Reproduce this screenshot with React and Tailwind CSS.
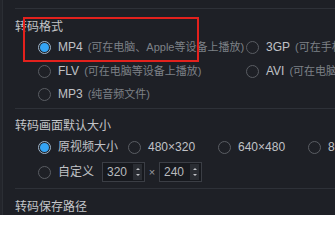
import React from "react";

const font = { fontFamily: '"Liberation Sans", "Noto Sans CJK SC", sans-serif' };

function Radio({ checked }) {
  if (checked) {
    return (
      <span className="w-[13px] h-[13px] shrink-0 rounded-full border border-[#9fb6cc] bg-[#1e2026] flex items-center justify-center">
        <span className="w-[9px] h-[9px] rounded-full bg-[#35a4f4]" />
      </span>
    );
  }
  return <span className="w-[13px] h-[13px] shrink-0 rounded-full border border-[#5a5d63]" />;
}

function Option({ checked, label, hint, className = "" }) {
  return (
    <div className={"flex items-center whitespace-nowrap " + className}>
      <Radio checked={checked} />
      <span className="ml-[7px] text-[12px] text-[#c0c2c6]">{label}</span>
      {hint && <span className="ml-[5px] text-[11px] text-[#7d8087]">{hint}</span>}
    </div>
  );
}

function Spin({ value }) {
  return (
    <div className="w-[43px] h-[20px] flex items-center border border-[#3b3e45] bg-[#17191e]">
      <span className="flex-1 pl-[4px] text-[12px] text-[#b9bbbf]">{value}</span>
      <div className="w-[9px] h-[16px] mr-[2px] flex flex-col items-center justify-center gap-[4px] bg-[#2a2d33]">
        <span className="w-0 h-0 border-l-[2px] border-r-[2px] border-b-[2px] border-l-transparent border-r-transparent border-b-[#c0c2c6]" />
        <span className="w-0 h-0 border-l-[2px] border-r-[2px] border-t-[2px] border-l-transparent border-r-transparent border-t-[#c0c2c6]" />
      </div>
    </div>
  );
}

function Heading({ children, className = "" }) {
  return (
    <div className={"h-[14px] flex items-center text-[12px] text-[#c3c5c9] " + className}>{children}</div>
  );
}

export default function App() {
  return (
    <div className="w-[335px] h-[215px] overflow-hidden bg-[#1e2026] flex" style={font}>
      <div className="w-[3px] shrink-0 bg-[#23252b] border-r border-[#2b2e34]" />
      <div className="flex-1 pl-[12px] pt-[8px]">
        <div className="relative border-t border-[#2e3138]">
          <div className="absolute left-[8px] top-[8px] w-[176px] h-[45px] border-2 border-[#e3211d] pointer-events-none" />
          <Heading className="mt-[11px]">转码格式</Heading>
          <div className="pl-[23px]">
            <div className="h-[20px] mt-[3px] flex items-center">
              <Option checked label="MP4" hint="(可在电脑、Apple等设备上播放)" className="w-[208px]" />
              <Option label="3GP" hint="(可在手机等设备上播放)" />
            </div>
            <div className="h-[20px] mt-[4px] flex items-center">
              <Option label="FLV" hint="(可在电脑等设备上播放)" className="w-[208px]" />
              <Option label="AVI" hint="(可在电脑等设备上播放)" />
            </div>
            <div className="h-[20px] mt-[3px] flex items-center">
              <Option label="MP3" hint="(纯音频文件)" />
            </div>
          </div>
        </div>
        <div className="mt-[4px] border-t border-[#2e3138]">
          <Heading className="mt-[10px]">转码画面默认大小</Heading>
          <div className="pl-[23px]">
            <div className="h-[20px] mt-[4px] flex items-center">
              <Option checked label="原视频大小" className="w-[90px]" />
              <Option label="480×320" className="w-[90px]" />
              <Option label="640×480" className="w-[90px]" />
              <Option label="800×600" />
            </div>
            <div className="h-[20px] mt-[5px] flex items-center">
              <Option label="自定义" className="w-[64px]" />
              <Spin value="320" />
              <span className="w-[14px] text-center text-[11px] text-[#9a9ca1]">×</span>
              <Spin value="240" />
            </div>
          </div>
        </div>
        <div className="mt-[6px] border-t border-[#2e3138]">
          <Heading className="mt-[11px]">转码保存路径</Heading>
        </div>
      </div>
    </div>
  );
}
